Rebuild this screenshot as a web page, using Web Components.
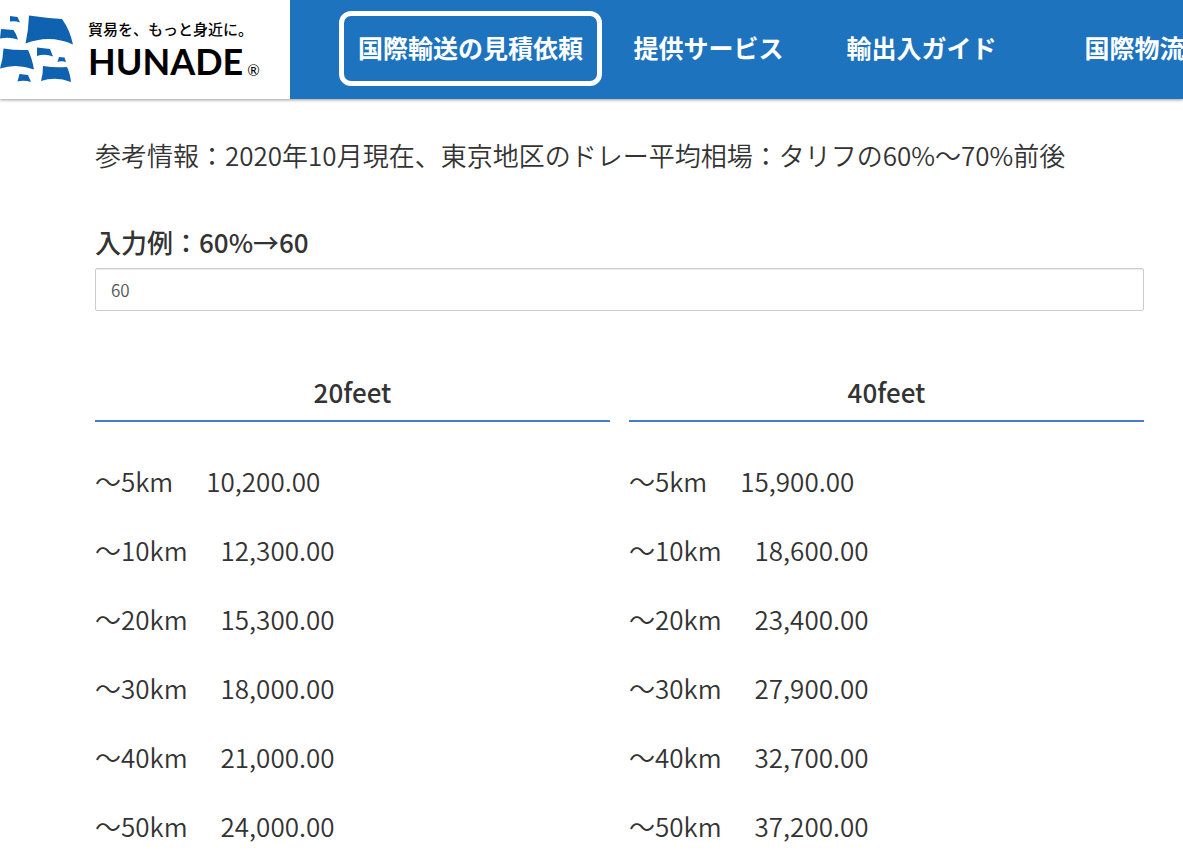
<!DOCTYPE html>
<html lang="ja">
<head>
<meta charset="utf-8">
<meta name="viewport" content="width=device-width, initial-scale=1">
<title>HUNADE</title>
<style>
  body {
    margin: 0;
    background: #fff;
    color: #333;
    font-family: "Noto Sans CJK JP", sans-serif;
    font-size: 26px;
    font-weight: 350;
    line-height: 42px;
    overflow-x: hidden;
  }
</style>
</head>
<body>
  <site-header>
    <site-logo slot="logo"></site-logo>
    <nav-item href="#estimate" boxed>国際輸送の見積依頼</nav-item>
    <nav-item href="#service">提供サービス</nav-item>
    <nav-item href="#guide">輸出入ガイド</nav-item>
    <nav-item href="#logistics">国際物流</nav-item>
  </site-header>
  <drayage-calculator rate="60">
    参考情報：2020年10月現在、東京地区のドレー平均相場：タリフの60%～70%前後
  </drayage-calculator>

<script>
class SiteLogo extends HTMLElement {
  constructor() {
    super();
    this.attachShadow({ mode: 'open' });
    this.shadowRoot.innerHTML = `
      <style>
        :host {
          display: block;
        }
        a {
          display: flex;
          align-items: center;
          gap: 13px;
          color: #000;
          text-decoration: none;
        }
        svg {
          flex: none;
          fill: #0f62b0;
        }
        .words {
          display: flex;
          flex-direction: column;
          gap: 2px;
          padding-top: 4px;
        }
        .tagline {
          font-size: 15px;
          font-weight: 500;
          line-height: 16px;
        }
        .name {
          display: flex;
          align-items: flex-end;
          gap: 4px;
          font-family: Lato, sans-serif;
          font-size: 36px;
          font-weight: 700;
          line-height: 44px;
        }
        .mark {
          font-size: 15px;
          font-weight: 400;
          line-height: 26px;
        }
      </style>
      <a href="#top">
        <svg width="75" height="70" viewBox="0 15 75 70" aria-hidden="true">
          <path d="M29 15.500 Q46 18 62 19 Q70 30 73 44.500 Q50 34 25.500 43.500 Q28.500 30 29 15.500Z"/>
          <path d="M10 16 L17.500 17 L20 22.500 Q15 20.500 10 21.500Z"/>
          <path d="M1 29 L13.500 30 Q16.500 34 18 39.500 Q9 36.500 0 38.500Z"/>
          <path d="M3.500 48.500 Q16 50.500 28 50 Q32 58 34 69.500 Q17 63 0 68.500 Q3 59 3.500 48.500Z"/>
          <path d="M37 47.500 L50 49 L53 56.500 Q45 53.500 37 56Z"/>
          <path d="M59 57 L64.500 57.500 L66 62 Q61.500 60.500 57.500 62Z"/>
          <path d="M43 66 Q55 68 67 67 Q70 73 71 82 Q56 76 41 81 Q43 74 43 66Z"/>
          <path d="M19.500 74 L28 75 L31 82 Q24 80 17.500 81.500Z"/>
        </svg>
        <span class="words">
          <span class="tagline">貿易を、もっと身近に。</span>
          <span class="name">HUNADE<span class="mark">®</span></span>
        </span>
      </a>
    `;
  }
}

class NavItem extends HTMLElement {
  constructor() {
    super();
    this.attachShadow({ mode: 'open' });
    this.shadowRoot.innerHTML = `
      <style>
        :host {
          display: block;
        }
        a {
          display: block;
          padding: 15px 0 17px;
          border: 5px solid transparent;
          border-radius: 12px;
          color: #fff;
          font-size: 25px;
          font-weight: 700;
          line-height: 33px;
          text-align: center;
          text-decoration: none;
          white-space: nowrap;
        }
        :host([boxed]) a {
          padding-left: 14px;
          padding-right: 14px;
          border-color: #fff;
        }
      </style>
      <a><slot></slot></a>
    `;
  }

  connectedCallback() {
    this.shadowRoot.querySelector('a').href = this.getAttribute('href');
  }
}

class SiteHeader extends HTMLElement {
  constructor() {
    super();
    this.attachShadow({ mode: 'open' });
    this.shadowRoot.innerHTML = `
      <style>
        :host {
          display: block;
        }
        header {
          display: flex;
          overflow: hidden;
          background: #1e73be;
          box-shadow: 0 1px 3px rgba(0, 0, 0, 0.4);
        }
        .logo {
          flex: none;
          display: flex;
          align-items: center;
          width: 290px;
          background: #fff;
        }
        nav {
          display: grid;
          grid-template-columns: auto repeat(3, 213px);
          padding: 11px 0 13px 49px;
        }
      </style>
      <header>
        <div class="logo"><slot name="logo"></slot></div>
        <nav><slot></slot></nav>
      </header>
    `;
  }
}

class FareList extends HTMLElement {
  constructor() {
    super();
    this.attachShadow({ mode: 'open' });
    this.shadowRoot.innerHTML = `
      <style>
        :host {
          display: block;
        }
        h3 {
          margin: 0;
          padding-bottom: 7px;
          border-bottom: 2px solid #467dcb;
          font-size: 26px;
          font-weight: 500;
          line-height: 42px;
          text-align: center;
        }
        ul {
          display: grid;
          gap: 27px;
          margin: 0;
          padding: 38px 0 20px;
          list-style: none;
        }
        li {
          display: flex;
          gap: 33px;
        }
      </style>
      <h3><slot></slot></h3>
      <ul></ul>
    `;
  }

  // fares: [distance in km, full tariff in yen]
  update(fares, rate) {
    const format = { minimumFractionDigits: 2, maximumFractionDigits: 2 };
    this.shadowRoot.querySelector('ul').innerHTML = fares.map(([km, tariff]) => `
      <li><span>～${km}km</span><span>${(tariff * rate / 100).toLocaleString('en-US', format)}</span></li>
    `).join('');
  }
}

const TARIFF_20 = [[5, 17000], [10, 20500], [20, 25500], [30, 30000], [40, 35000], [50, 40000]];
const TARIFF_40 = [[5, 26500], [10, 31000], [20, 39000], [30, 46500], [40, 54500], [50, 62000]];

class DrayageCalculator extends HTMLElement {
  constructor() {
    super();
    this.attachShadow({ mode: 'open' });
    this.shadowRoot.innerHTML = `
      <style>
        :host {
          display: block;
          padding: 35px 39px 0 95px;
        }
        p {
          margin: 0 0 45px;
        }
        label {
          display: block;
          font-weight: 500;
        }
        input {
          display: block;
          box-sizing: border-box;
          width: 100%;
          margin: 5px 0 60px;
          padding: 8px 15px;
          border: 1px solid #ccc;
          border-radius: 2px;
          box-shadow: inset 0 1px 1px rgba(0, 0, 0, 0.08);
          background: #fff;
          color: #555;
          font-family: inherit;
          font-size: 17px;
          font-weight: inherit;
          line-height: 25px;
        }
        .columns {
          display: grid;
          grid-template-columns: 1fr 1fr;
          gap: 19px;
        }
      </style>
      <p><slot></slot></p>
      <label for="rate">入力例：60%→60</label>
      <input id="rate" type="text" inputmode="numeric">
      <div class="columns">
        <fare-list id="feet20">20feet</fare-list>
        <fare-list id="feet40">40feet</fare-list>
      </div>
    `;
    this.input = this.shadowRoot.getElementById('rate');
    this.input.addEventListener('input', () => this.render());
  }

  connectedCallback() {
    this.input.value = this.getAttribute('rate');
    this.render();
  }

  render() {
    const rate = Number(this.input.value) || 0;
    this.shadowRoot.getElementById('feet20').update(TARIFF_20, rate);
    this.shadowRoot.getElementById('feet40').update(TARIFF_40, rate);
  }
}

customElements.define('site-logo', SiteLogo);
customElements.define('nav-item', NavItem);
customElements.define('site-header', SiteHeader);
customElements.define('fare-list', FareList);
customElements.define('drayage-calculator', DrayageCalculator);
</script>
</body>
</html>
